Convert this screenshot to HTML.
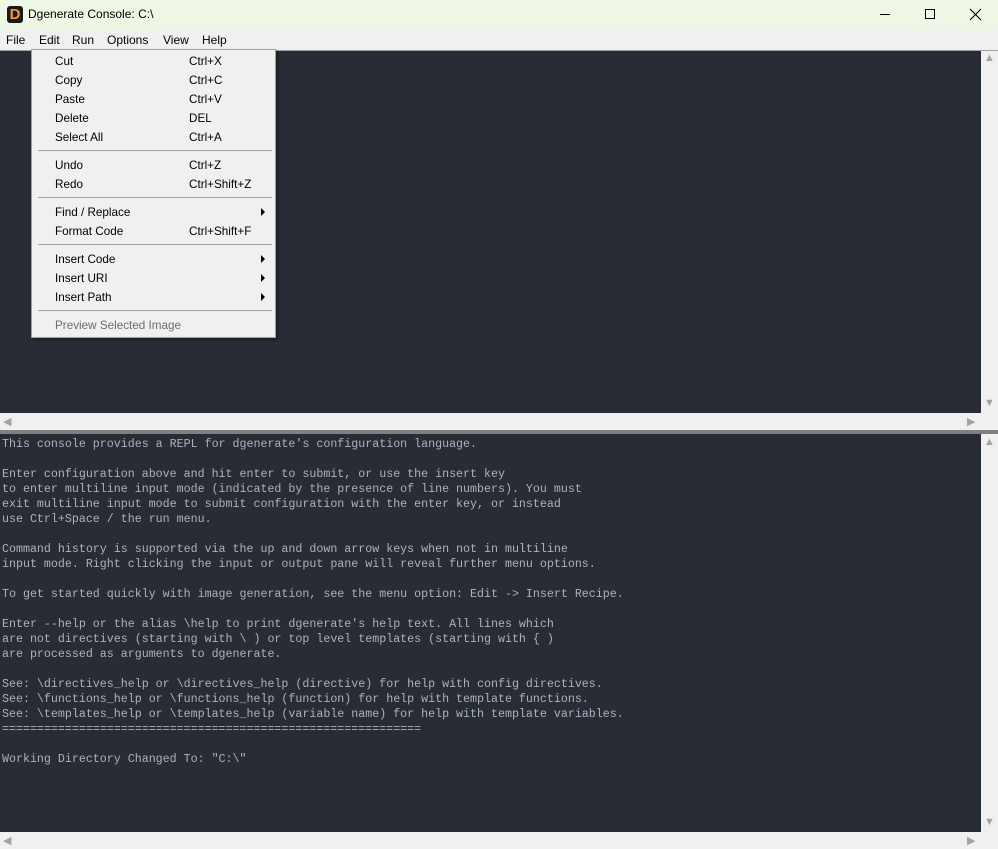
<!DOCTYPE html>
<html><head><meta charset="utf-8"><style>
*{margin:0;padding:0;box-sizing:border-box}
body{width:998px;height:849px;overflow:hidden;background:#f0f0f0;font-family:"Liberation Sans",sans-serif;font-size:12px;position:relative}
.title{position:absolute;left:0;top:0;width:998px;height:30px;background:#eef6e6}
.title .t{position:absolute;left:28px;top:7px;font-size:12px;color:#000}
.logo{position:absolute;left:7px;top:6px;width:16px;height:17px;background:#1a1a1a;border-radius:3px;color:#f0a030;font-weight:bold;font-size:15px;line-height:17px;text-align:center}
.menubar{position:absolute;left:0;top:30px;width:998px;height:20px;background:#f0f0f0}
.menubar span{position:absolute;top:3px;font-size:12px}
.pane{position:absolute;left:0;background:#282c34;width:981px}
.vs{position:absolute;left:981px;width:17px;background:#f0f0f0}
.hs{position:absolute;left:0;width:981px;height:17px;background:#f0f0f0}
.corner{position:absolute;left:981px;width:17px;height:17px;background:#f0f0f0}
.arr{position:absolute;color:#a3a3a3;font-size:11px}
pre{font-family:"Liberation Mono",monospace;font-size:11.65px;line-height:15px;color:#abb2bf;position:absolute;left:2px;top:437px}
.menu{position:absolute;left:31px;top:49px;width:245px;height:289px;background:#f0f0f0;border:1px solid #a0a0a0;box-shadow:2px 2px 3px rgba(0,0,0,.4)}
.menu div{position:absolute;font-size:11.7px;color:#000}
.menu .k{left:157px}
.menu .sep{left:6px;width:234px;height:1px;background:#a0a0a0}
.menu .tri{left:229px;width:0;height:0;border-top:4px solid transparent;border-bottom:4px solid transparent;border-left:4px solid #000}
</style></head><body>
<div class="title"><div class="logo">D</div><div class="t">Dgenerate Console: C:\</div>
<svg style="position:absolute;left:880px;top:8px" width="110" height="14"><line x1="0" y1="6.5" x2="10" y2="6.5" stroke="#000"/><rect x="45.5" y="1.5" width="9" height="9" fill="none" stroke="#000"/><path d="M90 1L101 12M101 1L90 12" stroke="#000" stroke-width="1.1"/></svg></div>
<div class="menubar"><span style="left:6px">File</span><span style="left:39px">Edit</span><span style="left:72px">Run</span><span style="left:107px">Options</span><span style="left:163px">View</span><span style="left:202px">Help</span></div>
<div style="position:absolute;left:0;top:50px;width:998px;height:1px;background:#a0a0a0"></div>
<div class="pane" style="top:51px;height:362px"></div>
<div class="vs" style="top:51px;height:362px"><div class="arr" style="left:3px;top:1px">▲</div><div class="arr" style="left:3px;top:346px">▼</div></div>
<div class="hs" style="top:413px"><div class="arr" style="left:3px;top:2px">◀</div><div class="arr" style="left:967px;top:2px">▶</div></div>
<div class="corner" style="top:413px"></div>
<div style="position:absolute;left:0;top:430px;width:998px;height:4px;background:#808080"></div>
<div class="pane" style="top:434px;height:398px"></div>
<div class="vs" style="top:434px;height:398px"><div class="arr" style="left:3px;top:2px">▲</div><div class="arr" style="left:3px;top:382px">▼</div></div>
<div class="hs" style="top:832px"><div class="arr" style="left:3px;top:2px">◀</div><div class="arr" style="left:967px;top:2px">▶</div></div>
<div class="corner" style="top:832px"></div>
<pre>This console provides a REPL for dgenerate's configuration language.

Enter configuration above and hit enter to submit, or use the insert key
to enter multiline input mode (indicated by the presence of line numbers). You must
exit multiline input mode to submit configuration with the enter key, or instead
use Ctrl+Space / the run menu.

Command history is supported via the up and down arrow keys when not in multiline
input mode. Right clicking the input or output pane will reveal further menu options.

To get started quickly with image generation, see the menu option: Edit -> Insert Recipe.

Enter --help or the alias \help to print dgenerate's help text. All lines which
are not directives (starting with \ ) or top level templates (starting with { )
are processed as arguments to dgenerate.

See: \directives_help or \directives_help (directive) for help with config directives.
See: \functions_help or \functions_help (function) for help with template functions.
See: \templates_help or \templates_help (variable name) for help with template variables.
============================================================

Working Directory Changed To: "C:\"</pre>
<div class="menu">
<div style="left:23px;top:5px">Cut</div><div class="k" style="top:5px">Ctrl+X</div>
<div style="left:23px;top:24px">Copy</div><div class="k" style="top:24px">Ctrl+C</div>
<div style="left:23px;top:43px">Paste</div><div class="k" style="top:43px">Ctrl+V</div>
<div style="left:23px;top:62px">Delete</div><div class="k" style="top:62px">DEL</div>
<div style="left:23px;top:81px">Select All</div><div class="k" style="top:81px">Ctrl+A</div>
<div class="sep" style="top:100px"></div>
<div style="left:23px;top:109px">Undo</div><div class="k" style="top:109px">Ctrl+Z</div>
<div style="left:23px;top:128px">Redo</div><div class="k" style="top:128px">Ctrl+Shift+Z</div>
<div class="sep" style="top:147px"></div>
<div style="left:23px;top:156px">Find / Replace</div><div class="tri" style="top:158px"></div>
<div style="left:23px;top:175px">Format Code</div><div class="k" style="top:175px">Ctrl+Shift+F</div>
<div class="sep" style="top:194px"></div>
<div style="left:23px;top:203px">Insert Code</div><div class="tri" style="top:205px"></div>
<div style="left:23px;top:222px">Insert URI</div><div class="tri" style="top:224px"></div>
<div style="left:23px;top:241px">Insert Path</div><div class="tri" style="top:243px"></div>
<div class="sep" style="top:260px"></div>
<div style="left:23px;top:269px;color:#6d6d6d">Preview Selected Image</div>
</div>
</body></html>
